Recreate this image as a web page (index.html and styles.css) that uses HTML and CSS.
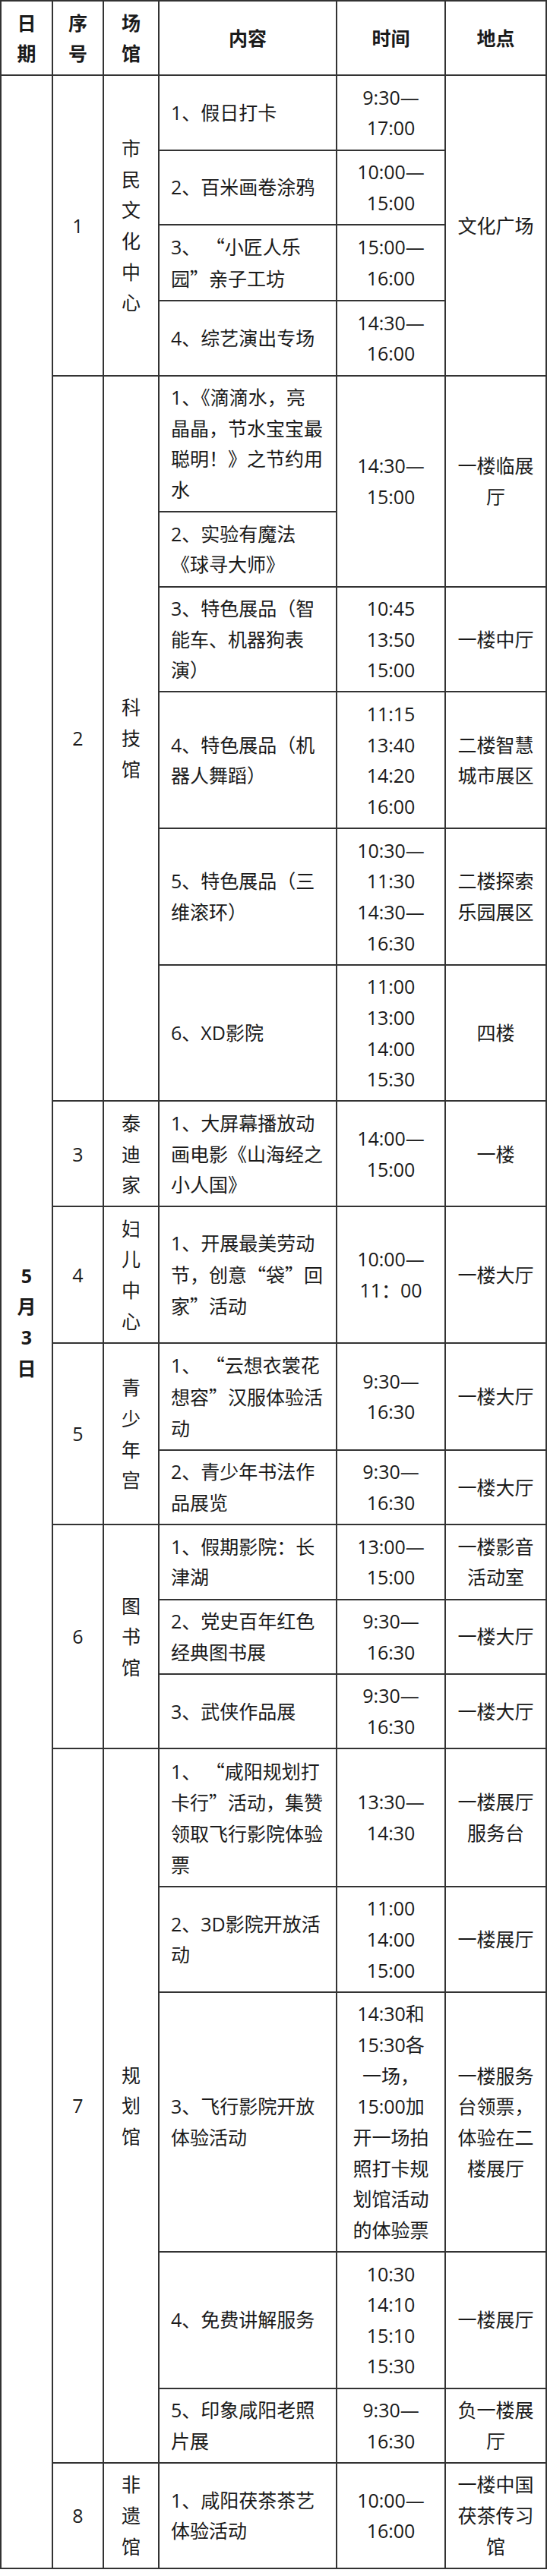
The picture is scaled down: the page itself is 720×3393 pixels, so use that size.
FILE: index.html
```html
<!DOCTYPE html>
<html lang="zh-CN">
<head>
<meta charset="utf-8">
<title>5月3日活动安排</title>
<link rel="stylesheet" href="styles.css">
</head>
<body>
<table class="schedule">
  <colgroup>
    <col class="c-date">
    <col class="c-seq">
    <col class="c-venue">
    <col class="c-content">
    <col class="c-time">
    <col class="c-loc">
  </colgroup>
  <thead>
    <tr>
      <th class="first">日<br>期</th>
      <th>序<br>号</th>
      <th>场<br>馆</th>
      <th>内容</th>
      <th>时间</th>
      <th>地点</th>
    </tr>
  </thead>
  <tbody>
    <tr>
      <td class="date first" rowspan="23">5<br>月<br>3<br>日</td>
      <td class="seq" rowspan="4">1</td>
      <td class="venue" rowspan="4">市<br>民<br>文<br>化<br>中<br>心</td>
      <td class="content">1、假日打卡</td>
      <td class="time">9:30—<br>17:00</td>
      <td class="loc" rowspan="4">文化广场</td>
    </tr>
    <tr>
      <td class="content">2、百米画卷涂鸦</td>
      <td class="time">10:00—<br>15:00</td>
    </tr>
    <tr>
      <td class="content">3、 <span class="q">“</span>小匠人乐<br>园<span class="q">”</span>亲子工坊</td>
      <td class="time">15:00—<br>16:00</td>
    </tr>
    <tr>
      <td class="content">4、综艺演出专场</td>
      <td class="time">14:30—<br>16:00</td>
    </tr>

    <tr>
      <td class="seq" rowspan="6">2</td>
      <td class="venue" rowspan="6">科<br>技<br>馆</td>
      <td class="content">1、《滴滴水，亮<br>晶晶，节水宝宝最<br>聪明！》之节约用<br>水</td>
      <td class="time" rowspan="2">14:30—<br>15:00</td>
      <td class="loc" rowspan="2">一楼临展<br>厅</td>
    </tr>
    <tr>
      <td class="content">2、实验有魔法<br>《球寻大师》</td>
    </tr>
    <tr>
      <td class="content">3、特色展品（智<br>能车、机器狗表<br>演）</td>
      <td class="time">10:45<br>13:50<br>15:00</td>
      <td class="loc">一楼中厅</td>
    </tr>
    <tr>
      <td class="content">4、特色展品（机<br>器人舞蹈）</td>
      <td class="time">11:15<br>13:40<br>14:20<br>16:00</td>
      <td class="loc">二楼智慧<br>城市展区</td>
    </tr>
    <tr>
      <td class="content">5、特色展品（三<br>维滚环）</td>
      <td class="time">10:30—<br>11:30<br>14:30—<br>16:30</td>
      <td class="loc">二楼探索<br>乐园展区</td>
    </tr>
    <tr>
      <td class="content">6、XD影院</td>
      <td class="time">11:00<br>13:00<br>14:00<br>15:30</td>
      <td class="loc">四楼</td>
    </tr>

    <tr>
      <td class="seq">3</td>
      <td class="venue">泰<br>迪<br>家</td>
      <td class="content">1、大屏幕播放动<br>画电影《山海经之<br>小人国》</td>
      <td class="time">14:00—<br>15:00</td>
      <td class="loc">一楼</td>
    </tr>

    <tr>
      <td class="seq">4</td>
      <td class="venue">妇<br>儿<br>中<br>心</td>
      <td class="content">1、开展最美劳动<br>节，创意<span class="q">“</span>袋<span class="q">”</span>回<br>家<span class="q">”</span>活动</td>
      <td class="time">10:00—<br>11：00</td>
      <td class="loc">一楼大厅</td>
    </tr>

    <tr>
      <td class="seq" rowspan="2">5</td>
      <td class="venue" rowspan="2">青<br>少<br>年<br>宫</td>
      <td class="content">1、 <span class="q">“</span>云想衣裳花<br>想容<span class="q">”</span>汉服体验活<br>动</td>
      <td class="time">9:30—<br>16:30</td>
      <td class="loc">一楼大厅</td>
    </tr>
    <tr>
      <td class="content">2、青少年书法作<br>品展览</td>
      <td class="time">9:30—<br>16:30</td>
      <td class="loc">一楼大厅</td>
    </tr>

    <tr>
      <td class="seq" rowspan="3">6</td>
      <td class="venue" rowspan="3">图<br>书<br>馆</td>
      <td class="content">1、假期影院：长<br>津湖</td>
      <td class="time">13:00—<br>15:00</td>
      <td class="loc">一楼影音<br>活动室</td>
    </tr>
    <tr>
      <td class="content">2、党史百年红色<br>经典图书展</td>
      <td class="time">9:30—<br>16:30</td>
      <td class="loc">一楼大厅</td>
    </tr>
    <tr>
      <td class="content">3、武侠作品展</td>
      <td class="time">9:30—<br>16:30</td>
      <td class="loc">一楼大厅</td>
    </tr>

    <tr>
      <td class="seq" rowspan="5">7</td>
      <td class="venue" rowspan="5">规<br>划<br>馆</td>
      <td class="content">1、 <span class="q">“</span>咸阳规划打<br>卡行<span class="q">”</span>活动，集赞<br>领取飞行影院体验<br>票</td>
      <td class="time">13:30—<br>14:30</td>
      <td class="loc">一楼展厅<br>服务台</td>
    </tr>
    <tr>
      <td class="content">2、3D影院开放活<br>动</td>
      <td class="time">11:00<br>14:00<br>15:00</td>
      <td class="loc">一楼展厅</td>
    </tr>
    <tr>
      <td class="content">3、飞行影院开放<br>体验活动</td>
      <td class="time">14:30和<br>15:30各<br>一场，<br>15:00加<br>开一场拍<br>照打卡规<br>划馆活动<br>的体验票</td>
      <td class="loc">一楼服务<br>台领票，<br>体验在二<br>楼展厅</td>
    </tr>
    <tr>
      <td class="content">4、免费讲解服务</td>
      <td class="time">10:30<br>14:10<br>15:10<br>15:30</td>
      <td class="loc">一楼展厅</td>
    </tr>
    <tr>
      <td class="content">5、印象咸阳老照<br>片展</td>
      <td class="time">9:30—<br>16:30</td>
      <td class="loc">负一楼展<br>厅</td>
    </tr>

    <tr>
      <td class="seq">8</td>
      <td class="venue">非<br>遗<br>馆</td>
      <td class="content">1、咸阳茯茶茶艺<br>体验活动</td>
      <td class="time">10:00—<br>16:00</td>
      <td class="loc">一楼中国<br>茯茶传习<br>馆</td>
    </tr>
  </tbody>
</table>
</body>
</html>
```

FILE: styles.css
```css
html, body {
  margin: 0;
  padding: 0;
  background: #ffffff;
}

body {
  font-family: "Open Sans", "Noto Sans CJK SC", sans-serif;
  font-size: 25px;
  color: #1a1a1a;
}

.schedule {
  width: 720px;
  table-layout: fixed;
  border-collapse: separate;
  border-spacing: 0;
}

.c-date { width: 70px; }
.c-seq { width: 67px; }
.c-venue { width: 73px; }
.c-content { width: 234px; }
.c-time { width: 143px; }
.c-loc { width: 133px; }

.schedule th,
.schedule td {
  border-right: 2px solid #333333;
  border-bottom: 2px solid #333333;
  padding: 7.5px 0;
  line-height: 40.65px;
  text-align: center;
  vertical-align: middle;
  white-space: nowrap;
  font-weight: 400;
}

.schedule th {
  border-top: 2px solid #333333;
  font-weight: 700;
}

.schedule .first {
  border-left: 2px solid #333333;
}

.schedule .date {
  font-weight: 700;
}

.schedule .content {
  text-align: left;
  padding-left: 15px;
  padding-right: 10px;
}

.q {
  font-family: "Noto Sans CJK SC", sans-serif;
  font-feature-settings: "fwid" 1;
}
```
